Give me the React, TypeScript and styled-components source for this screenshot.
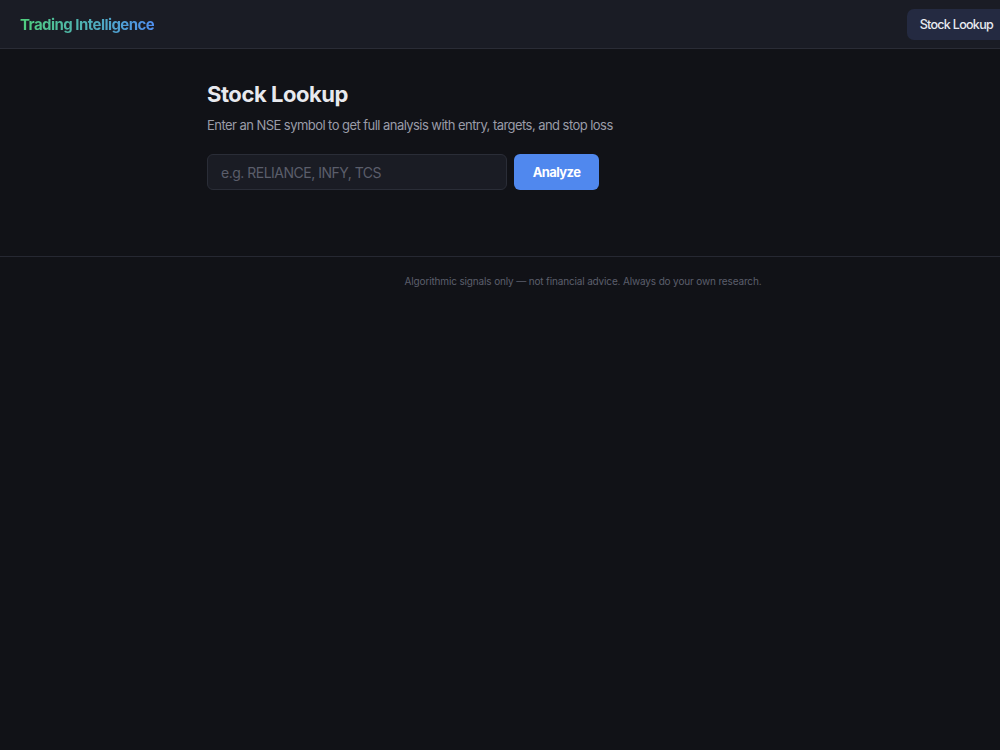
import styled, { createGlobalStyle } from "styled-components";

const GlobalStyle = createGlobalStyle`
  html, body {
    margin: 0;
    padding: 0;
    background: #111217;
    overflow: hidden;
  }
  body {
    font-family: Inter, "Liberation Sans", sans-serif;
    color: #e6e7eb;
  }
`;

// the page is wider than the window, so the centred column sits right of centre
const Shell = styled.div`
  width: 1166px;
  min-height: 750px;
  background: #111217;
`;

const Header = styled.header`
  box-sizing: border-box;
  display: flex;
  align-items: center;
  justify-content: space-between;
  width: 1026px;
  height: 49px;
  padding: 0 20px;
  background: #1a1c25;
  border-bottom: 1px solid #2a2c36;
`;

const Brand = styled.div`
  font-size: 15px;
  font-weight: 700;
  letter-spacing: -0.55px;
  background: linear-gradient(90deg, #4fcf7c 0%, #4f8ff0 100%);
  -webkit-background-clip: text;
  background-clip: text;
  color: transparent;
`;

const Nav = styled.nav`
  display: flex;
  gap: 8px;
`;

const NavButton = styled.button<{ $active?: boolean }>`
  height: 31px;
  padding: 0 13px;
  border: none;
  border-radius: 7px;
  font-family: inherit;
  font-size: 12.5px;
  font-weight: 500;
  letter-spacing: -0.7px;
  color: ${({ $active }) => ($active ? "#e8eaf0" : "#8b8f9c")};
  background: ${({ $active }) => ($active ? "#242a41" : "transparent")};
  cursor: pointer;
`;

const Main = styled.main`
  box-sizing: border-box;
  max-width: 800px;
  margin: 0 auto;
  padding: 32px 24px 66px;
`;

const Title = styled.h1`
  margin: 0;
  font-size: 22px;
  font-weight: 700;
  letter-spacing: -0.45px;
  line-height: 26px;
  color: #e8e9ee;
`;

const Subtitle = styled.p`
  margin: 9px 0 0;
  font-size: 13px;
  line-height: 18px;
  letter-spacing: -0.55px;
  color: #9a9ca8;
`;

const SearchRow = styled.form`
  display: flex;
  gap: 7px;
  margin-top: 20px;
`;

const SymbolInput = styled.input`
  box-sizing: border-box;
  width: 300px;
  height: 36px;
  padding: 0 13px;
  border: 1px solid #2a2d37;
  border-radius: 6px;
  background: #1a1c24;
  font-family: inherit;
  font-size: 14px;
  letter-spacing: -0.5px;
  color: #e6e7eb;
  outline: none;

  &::placeholder {
    color: #5b5e6b;
  }
`;

const AnalyzeButton = styled.button`
  height: 36px;
  width: 85px;
  border: none;
  border-radius: 6px;
  background: #5088ee;
  font-family: inherit;
  font-size: 13px;
  font-weight: 700;
  letter-spacing: -0.6px;
  color: #ffffff;
  cursor: pointer;
`;

const Footer = styled.footer`
  border-top: 1px solid #262832;
  padding: 17px 24px;
  text-align: center;
  font-size: 10px;
  line-height: 14px;
  letter-spacing: -0.15px;
  color: #5c5f6c;
`;

export default function App() {
  return (
    <>
      <GlobalStyle />
      <Shell>
        <Header>
          <Brand>Trading Intelligence</Brand>
          <Nav>
            <NavButton $active>Stock Lookup</NavButton>
          </Nav>
        </Header>
        <Main>
          <Title>Stock Lookup</Title>
          <Subtitle>
            Enter an NSE symbol to get full analysis with entry, targets, and stop loss
          </Subtitle>
          <SearchRow onSubmit={(e) => e.preventDefault()}>
            <SymbolInput placeholder="e.g. RELIANCE, INFY, TCS" />
            <AnalyzeButton type="submit">Analyze</AnalyzeButton>
          </SearchRow>
        </Main>
        <Footer>
          Algorithmic signals only — not financial advice. Always do your own research.
        </Footer>
      </Shell>
    </>
  );
}
